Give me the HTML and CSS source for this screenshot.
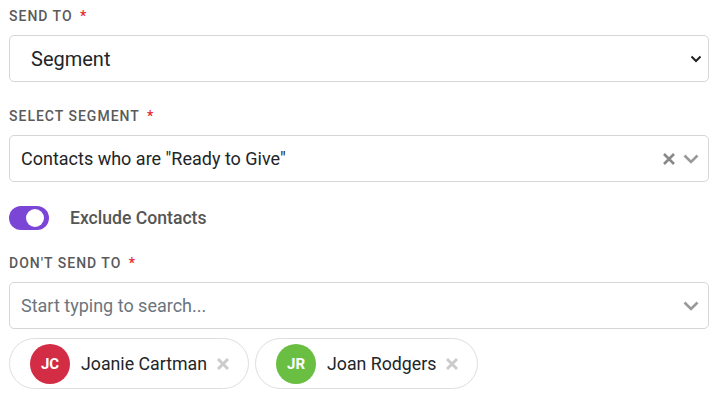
FILE: index.html
```html
<!DOCTYPE html>
<html>
<head>
<meta charset="utf-8">
<link rel="stylesheet" href="styles.css">
</head>
<body>
<form class="form">
  <div class="group">
    <div class="label">Send to <span class="req">*</span></div>
    <div class="control control-select">
      <span class="value-lg">Segment</span>
      <svg class="chev-dark" width="12" height="8" viewBox="0 0 12 8"><path d="M1.5 1.5 L6 6 L10.5 1.5" fill="none" stroke="#222" stroke-width="2"/></svg>
    </div>
  </div>
  <div class="group">
    <div class="label">Select segment <span class="req">*</span></div>
    <div class="control">
      <span class="value">Contacts who are "Ready to Give"</span>
      <div class="indicators">
        <svg width="14" height="12" viewBox="0 0 14 12"><path d="M2 1 L12 11 M12 1 L2 11" stroke="#888" stroke-width="2.6"/></svg>
        <svg width="16" height="10" viewBox="0 0 16 10"><path d="M1.5 1.5 L8 8 L14.5 1.5" fill="none" stroke="#999" stroke-width="2.6"/></svg>
      </div>
    </div>
  </div>
  <div class="toggle-row">
    <span class="switch"><span class="knob"></span></span>
    <span class="toggle-label">Exclude Contacts</span>
  </div>
  <div class="group group-last">
    <div class="label">Don't send to <span class="req">*</span></div>
    <div class="control">
      <span class="placeholder">Start typing to search...</span>
      <div class="indicators">
        <svg width="16" height="10" viewBox="0 0 16 10"><path d="M1.5 1.5 L8 8 L14.5 1.5" fill="none" stroke="#999" stroke-width="2.6"/></svg>
      </div>
    </div>
    <div class="chips">
      <div class="chip">
        <span class="avatar avatar-red">JC</span>
        <span class="chip-name">Joanie Cartman</span>
        <svg class="chip-x" width="14" height="14" viewBox="0 0 14 14"><path d="M2 2 L12 12 M12 2 L2 12" stroke="#ccc" stroke-width="3"/></svg>
      </div>
      <div class="chip">
        <span class="avatar avatar-green">JR</span>
        <span class="chip-name">Joan Rodgers</span>
        <svg class="chip-x" width="14" height="14" viewBox="0 0 14 14"><path d="M2 2 L12 12 M12 2 L2 12" stroke="#ccc" stroke-width="3"/></svg>
      </div>
    </div>
  </div>
</form>
</body>
</html>
```
FILE: styles.css
```css
* { box-sizing: border-box; }
html, body { margin: 0; padding: 0; background: #fff; }
body {
  font-family: Roboto, "Liberation Sans", Arial, sans-serif;
  padding: 6px 11px 0 9px;
}
.form { width: 700px; }
.group { margin-bottom: 24px; }
.group-last { margin-bottom: 0; }
.label {
  font-size: 14px;
  line-height: 20px;
  font-weight: 500;
  letter-spacing: 1px;
  text-transform: uppercase;
  color: #5a5a5a;
  margin-bottom: 9px;
}
.req { color: #e5262b; margin-left: 3px; }
.control {
  height: 47px;
  border: 1px solid #d6d6d9;
  border-radius: 5px;
  display: flex;
  align-items: center;
  padding: 0 9px 0 11px;
}
.control-select { padding: 0 6px 0 21px; }
.value-lg { font-size: 20px; color: #212529; flex: 1; }
.value { font-size: 18px; color: #212529; flex: 1; }
.placeholder { font-size: 18px; color: #6c757d; flex: 1; }
.indicators { display: flex; align-items: center; gap: 7px; }
.toggle-row {
  display: flex;
  align-items: center;
  height: 24px;
  margin-bottom: 23px;
}
.switch {
  width: 40px;
  height: 24px;
  border-radius: 12px;
  background: #7b45d6;
  position: relative;
  margin-right: 21px;
}
.knob {
  position: absolute;
  width: 18px;
  height: 18px;
  border-radius: 50%;
  background: #fff;
  top: 3px;
  right: 5px;
}
.toggle-label { font-size: 17.6px; font-weight: 500; color: #555; }
.chips { display: flex; gap: 6px; margin-top: 9px; }
.chip {
  display: flex;
  align-items: center;
  height: 51px;
  border: 1px solid #dedede;
  border-radius: 26px;
  padding: 0 18px 0 20px;
}
.avatar {
  width: 40px;
  height: 40px;
  border-radius: 50%;
  color: #fff;
  font-size: 15px;
  font-weight: 700;
  display: flex;
  align-items: center;
  justify-content: center;
  margin-right: 11px;
}
.avatar-red { background: #d32c45; }
.avatar-green { background: #6abf43; }
.chip-name { font-size: 17.75px; color: #212529; margin-right: 9px; }
.chip-x { display: block; }
```
